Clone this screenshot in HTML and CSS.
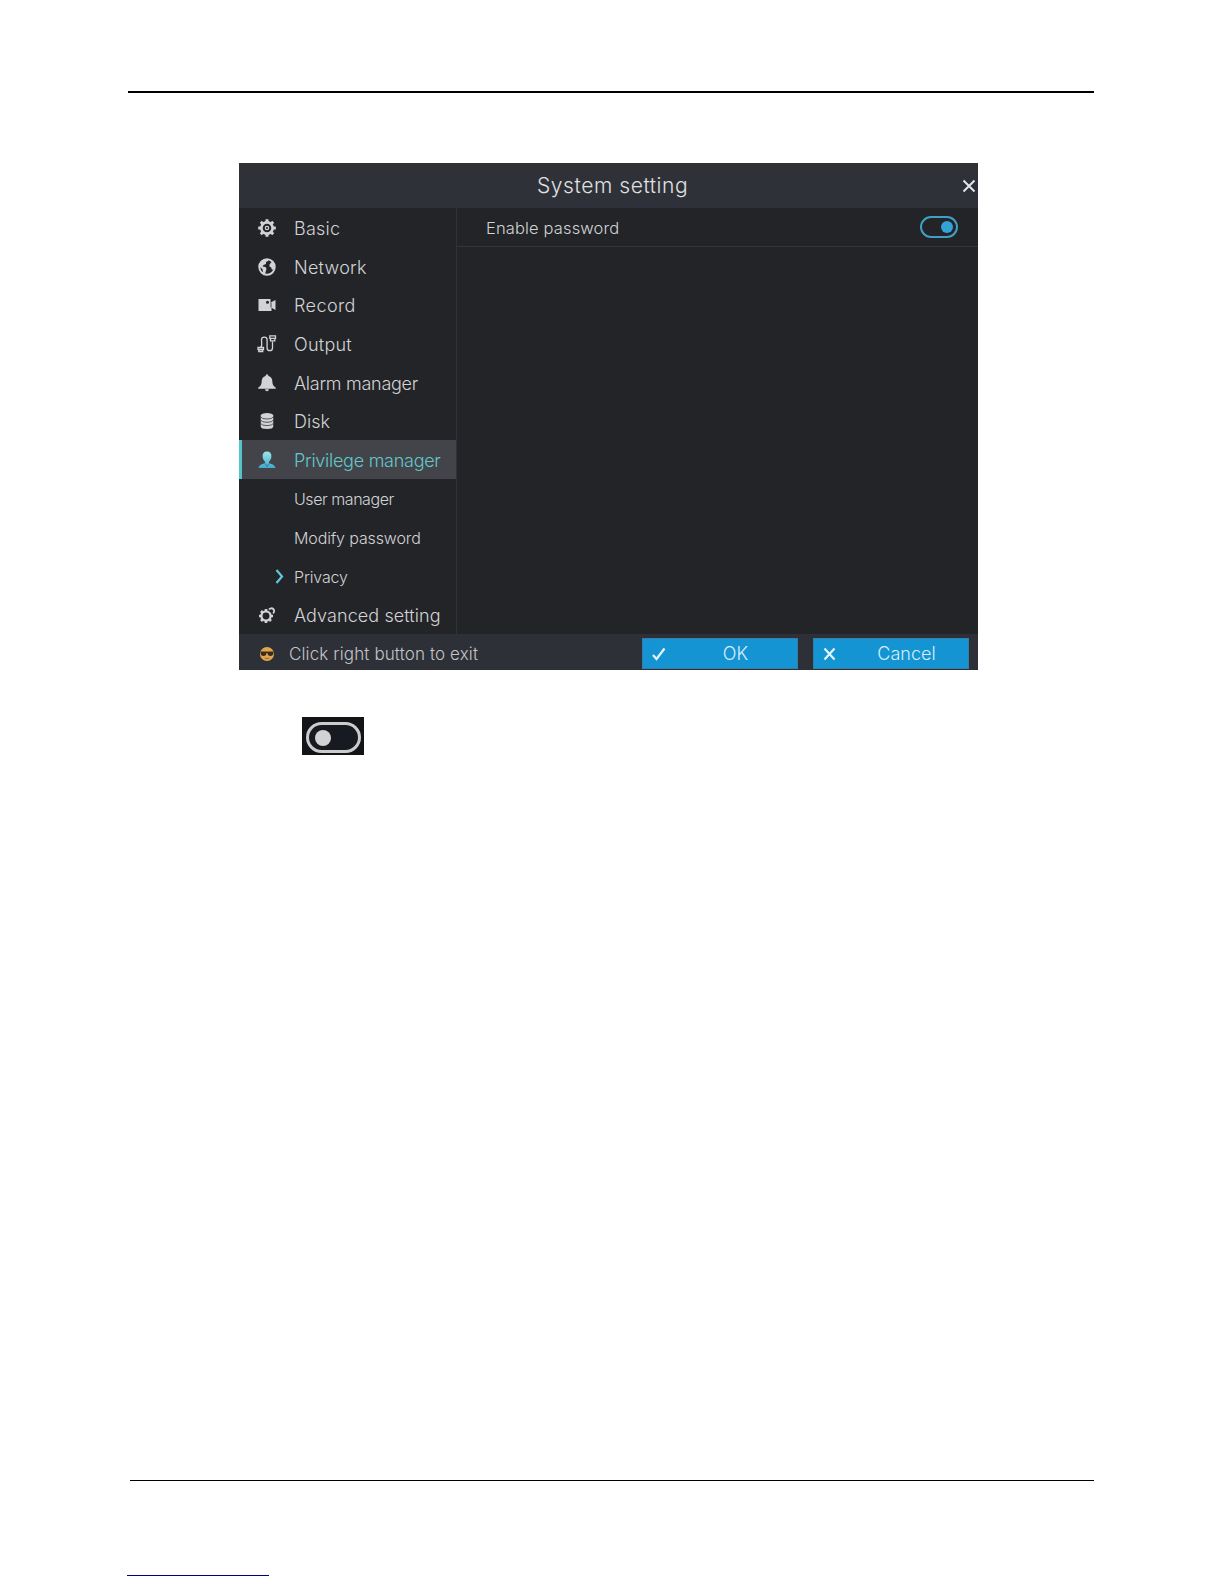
FILE: index.html
```html
<!DOCTYPE html>
<html lang="en">

<head>
    <meta charset="UTF-8">
    <meta name="viewport" content="width=device-width, initial-scale=1.0">
    <title>System setting</title>
    <link rel="stylesheet" href="styles.css">
</head>

<body>
    <div class="page">
        <div class="rule-top"></div>

        <div class="dialog">
            <div class="titlebar">
                <span class="title">System setting</span>
                <svg class="close" viewBox="0 0 14 14"><path d="M1.5 1.5l11 11M12.5 1.5l-11 11" /></svg>
            </div>

            <div class="main">
                <div class="sidebar">
                    <div class="item">
                        <svg class="icon" viewBox="0 0 20 20">
                            <circle cx="10" cy="10" r="5.6" fill="none" stroke="currentColor" stroke-width="2.6" />
                            <circle cx="10" cy="10" r="1.7" fill="none" stroke="currentColor" stroke-width="1.2" />
                            <path d="M10 1.2v3M10 15.8v3M1.2 10h3M15.8 10h3M3.8 3.8l2 2M14.2 14.2l2 2M3.8 16.2l2-2M14.2 5.8l2-2" stroke="currentColor" stroke-width="3" />
                        </svg>
                        <span class="wide">Basic</span>
                    </div>
                    <div class="item">
                        <svg class="icon" viewBox="0 0 20 20">
                            <circle cx="10" cy="10" r="7.7" fill="none" stroke="currentColor" stroke-width="2" />
                            <path d="M3 6l4-4 4 0 0 2-2 1 0 2-2.500 1-1 1.500 3 .5 1 2-1.500 5-2-1-.5-4-4-3zM12.500 7.500l2.500-3 2 2 .5 5-2.500 1.500-.8-2.500-1.700-1z" fill="currentColor" />
                        </svg>
                        <span class="wide">Network</span>
                    </div>
                    <div class="item">
                        <svg class="icon" viewBox="0 0 20 20">
                            <path d="M1.500 4h12v3.500l5-2.500v10l-4-2.200v3.200h-13z" fill="currentColor" />
                            <circle cx="10.500" cy="7.300" r="1.500" fill="#232428" />
                            <path d="M14 7.500v5" stroke="#232428" stroke-width=".8" />
                        </svg>
                        <span class="wider">Record</span>
                    </div>
                    <div class="item">
                        <svg class="icon" viewBox="0 0 20 20" fill="none" stroke="currentColor" stroke-width="1.300">
                            <path d="M3.700 13.500c2-2 .8-4 .8-7.500a2.800 2.800 0 0 1 5.600 0v8a2.700 2.700 0 0 0 5.400 0V7.500" />
                            <path d="M1 13.500h5.500v2H1zM1.800 15.500v2h3.900v-2M12.800 1.800h5.700v2.500h-5.700zM13.500 4.300v2.500h4.300V4.300" />
                        </svg>
                        <span class="wide">Output</span>
                    </div>
                    <div class="item">
                        <svg class="icon" viewBox="0 0 20 20">
                            <path d="M10 1.200q1.300 0 1.400 1.700 4 1 4 6 0 3.500 3.300 5.600v1.200H1.300v-1.200q3.300-2.100 3.300-5.600 0-5 4-6 .1-1.700 1.400-1.700zM8 16.300h4q-.3 1.900-2 1.900t-2-1.900z" fill="currentColor" />
                        </svg>
                        <span class="narrow">Alarm manager</span>
                    </div>
                    <div class="item">
                        <svg class="icon" viewBox="0 0 20 20">
                            <path d="M3.800 4.500v11q0 2.500 6.200 2.500t6.200-2.500v-11" fill="currentColor" />
                            <ellipse cx="10" cy="4.500" rx="6.200" ry="2.500" fill="currentColor" />
                            <path d="M3.800 6q1 2 6.200 2t6.200-2M3.800 9.300q1 2 6.200 2t6.200-2M3.800 12.600q1 2 6.200 2t6.200-2" fill="none" stroke="#4a4b4e" stroke-width=".9" />
                        </svg>
                        <span>Disk</span>
                    </div>
                    <div class="item active">
                        <svg class="icon" viewBox="0 0 20 20">
                            <defs>
                                <linearGradient id="user" x1="0" y1="0" x2="0" y2="1">
                                    <stop offset="0" stop-color="#9fe4e6" />
                                    <stop offset="1" stop-color="#3fa9cf" />
                                </linearGradient>
                            </defs>
                            <path d="M10 1.500c3.200 0 4.600 2 4.400 5-.2 2.400-1.200 4-2.400 5.200v1.600c3 .8 6 1.800 6.500 4.700h-17c.5-2.900 3.500-3.900 6.500-4.700v-1.600C6.800 10.500 5.800 8.900 5.600 6.500c-.2-3 1.200-5 4.400-5z" fill="url(#user)" />
                            <path d="M8 13.500l2 3 2-3" fill="none" stroke="#2b6f88" stroke-width=".8" />
                        </svg>
                        <span class="narrow">Privilege manager</span>
                    </div>
                    <div class="item sub"><span class="narrower">User manager</span></div>
                    <div class="item sub"><span>Modify password</span></div>
                    <div class="item sub current">
                        <svg class="arrow" viewBox="0 0 9 15"><path d="M1.500 1l5.500 6.500L1.500 14" /></svg>
                        <span>Privacy</span>
                    </div>
                    <div class="item">
                        <svg class="icon" viewBox="0 0 20 20" fill="none" stroke="currentColor">
                            <circle cx="9" cy="11" r="4.600" stroke-width="2.300" />
                            <path d="M9 4v2M9 16v2M2 11h2M4 6l1.500 1.500M12.500 14.500L14 16M4 16l1.500-1.500M14 11h2" stroke-width="2.600" />
                            <path d="M12 4.500a2.800 2.800 0 1 1 4 3.800" stroke-width="1.800" />
                        </svg>
                        <span class="advanced">Advanced setting</span>
                    </div>
                </div>

                <div class="content">
                    <div class="option">
                        <span>Enable password</span>
                        <div class="toggle on"></div>
                    </div>
                </div>
            </div>

            <div class="footer">
                <svg class="face" viewBox="0 0 16 16">
                    <circle cx="8" cy="8" r="7" fill="#dfa650" />
                    <path d="M1.500 5.500h13q0 4.500-3 4.500T8.500 7h-1q0 3-3 3t-3-4.500z" fill="#3c2c20" />
                    <path d="M5.500 12q2.500 1.500 5 0" fill="none" stroke="#9a6a35" />
                </svg>
                <span class="hint">Click right button to exit</span>
                <button class="btn">
                    <svg class="mark" viewBox="0 0 14 14"><path d="M1 8l3.500 4L12.500 1.500" /></svg>
                    <span>OK</span>
                </button>
                <button class="btn">
                    <svg class="mark" viewBox="0 0 14 14"><path d="M1.500 1.500l10 11M11.500 1.500l-10 11" /></svg>
                    <span>Cancel</span>
                </button>
            </div>
        </div>

        <div class="sample"><div class="toggle off"></div></div>

        <div class="rule-bottom"></div>
        <div class="link-line"></div>
    </div>
</body>

</html>
```
FILE: styles.css
```css
* {
    box-sizing: border-box;
}

body {
    margin: 0;
    background: #fff;
    font-family: Inter, "Liberation Sans", sans-serif;
    font-weight: 300;
}

.page {
    display: flex;
    flex-direction: column;
    height: 1584px;
    padding: 91px 130px 8px 127px;
    overflow: hidden;
}

.rule-top {
    height: 2px;
    margin-left: 1px;
    background: #000;
}

.dialog {
    display: flex;
    flex-direction: column;
    width: 739px;
    height: 507px;
    margin: 70px 0 0 112px;
    background: #232428;
    color: #d2d3d5;
}

.titlebar {
    display: flex;
    align-items: center;
    height: 45px;
    padding: 0 2px 0 298px;
    background: linear-gradient(#303137, #2e3139);
}

.title {
    flex: 1;
    font-size: 21px;
    color: #e0e1e3;
    letter-spacing: 0.57px;
}

.close {
    width: 14px;
    height: 14px;
    margin-top: 1px;
    fill: none;
    stroke: #e4e5e7;
    stroke-width: 2;
}

.main {
    display: flex;
    height: 426px;
}

.sidebar {
    width: 218px;
    border-right: 1px solid #313236;
}

.item {
    display: flex;
    align-items: center;
    gap: 17px;
    height: 38.7px;
    padding-left: 18px;
    font-size: 18px;
    white-space: nowrap;
}

.item span {
    padding-top: 2px;
}

.item .wide {
    letter-spacing: 0.25px;
}

.item .wider {
    letter-spacing: 0.4px;
}

.item .narrow {
    letter-spacing: -0.27px;
}

.item .narrower {
    letter-spacing: -0.45px;
}

.item .advanced {
    letter-spacing: 0.08px;
}

.item.active {
    padding-left: 15px;
    border-left: 3px solid #55c3cc;
    background: #434449;
    color: #62c8cc;
}

.item.sub {
    padding-left: 55px;
    font-size: 16px;
    letter-spacing: -0.13px;
}

.item.current {
    gap: 10px;
    padding-left: 36px;
}

.icon {
    width: 20px;
    height: 20px;
    flex: none;
    margin-top: 1px;
}

.arrow {
    width: 9px;
    height: 15px;
    margin-top: 1px;
    fill: none;
    stroke: #5ec9dc;
    stroke-width: 2.2;
}

.content {
    flex: 1;
}

.option {
    display: flex;
    align-items: center;
    justify-content: space-between;
    height: 39px;
    padding: 0 20px 0 29px;
    border-bottom: 1px solid #35363a;
    font-size: 16.5px;
    letter-spacing: 0.14px;
}

.option span {
    padding-top: 2px;
}

.toggle {
    display: flex;
    align-items: center;
}

.toggle::before {
    content: '';
    border-radius: 50%;
}

.toggle.on {
    justify-content: flex-end;
    width: 38px;
    height: 22px;
    padding-right: 3px;
    margin-top: -1px;
    border: 2px solid #419fc3;
    border-radius: 11px;
}

.toggle.on::before {
    width: 12px;
    height: 12px;
    background: #31a3d6;
}

.footer {
    display: flex;
    align-items: center;
    height: 36px;
    padding: 0 9px 0 20px;
    background: #2e3037;
}

.face {
    width: 16px;
    height: 16px;
    margin: 4px 14px 0 0;
}

.hint {
    flex: 1;
    padding-top: 4px;
    font-size: 17px;
    color: #c3c4c7;
    letter-spacing: 0.12px;
    white-space: nowrap;
}

.btn {
    display: flex;
    align-items: center;
    width: 156px;
    height: 31px;
    margin: 3px 0 0 15px;
    padding: 0 0 1px 9px;
    border: 1px solid #347fa8;
    background: #1594d3;
    color: #d5effa;
    font-family: inherit;
    font-size: 18px;
    font-weight: 300;
}

.btn span {
    flex: 1;
    text-align: center;
    padding-left: 8px;
}

.mark {
    width: 14px;
    height: 14px;
    margin-top: 2px;
    fill: none;
    stroke: #e2f4fc;
    stroke-width: 2.2;
}

/* switched-off toggle below the dialog */
.sample {
    width: 62px;
    height: 38px;
    margin: 47px 0 0 175px;
    padding: 5px 3px 0 4px;
    background: #131417;
}

.toggle.off {
    width: 55px;
    height: 31px;
    padding-left: 6px;
    border: 3px solid #cbcbcd;
    border-radius: 16px;
    background: #181a22;
}

.toggle.off::before {
    width: 16px;
    height: 16px;
    background: #d2d2d4;
}

.rule-bottom {
    height: 1px;
    margin: auto 0 0 3px;
    background: #000;
}

.link-line {
    width: 142px;
    height: 1px;
    margin-top: 94px;
    background: #000080;
}
```
